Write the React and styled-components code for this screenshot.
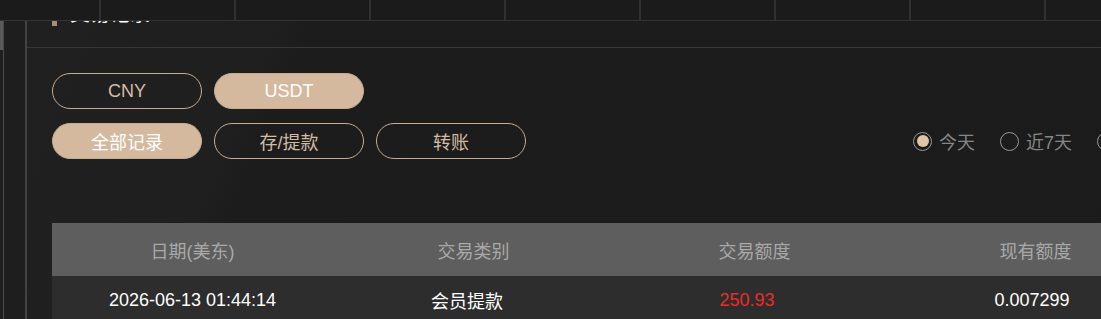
import styled, { createGlobalStyle } from 'styled-components';

const GlobalStyle = createGlobalStyle`
  html, body {
    margin: 0;
    padding: 0;
    background: #1b1b1b;
    overflow: hidden;
  }
  body {
    font-family: "Liberation Sans", "Noto Sans CJK SC", sans-serif;
    font-size: 18px;
  }
`;

const TopBar = styled.div`
  position: fixed;
  top: 0;
  left: 0;
  right: 0;
  z-index: 10;
  display: flex;
  height: 20px;
  background: #1b1b1b;
  border-bottom: 1px solid #343434;
`;

const TopLead = styled.div`
  width: 99px;
  flex-shrink: 0;
`;

const TopTab = styled.div`
  width: 133px;
  flex-shrink: 0;
  border-left: 2px solid #303030;
`;

const Layout = styled.div`
  display: flex;
  min-height: 100vh;
  width: 1400px;
`;

const Rail = styled.div`
  display: flex;
  width: 25px;
  flex-shrink: 0;
  background: #1e1e1e;
  border-right: 2px solid #434343;
`;

const ScrollTrack = styled.div`
  width: 3px;
  background: #1f1f1f;
  border-right: 1px solid #4c4c4c;
`;

const ScrollThumb = styled.div`
  height: 50px;
  background: #5a5a5a;
`;

const Panel = styled.div`
  flex: 1;
  background: linear-gradient(112deg, #202020 0%, #1f1f1f 16%, #1c1c1c 19%, #1b1b1b 100%);
`;

const TitleRow = styled.div`
  display: flex;
  align-items: flex-start;
  gap: 13px;
  height: 48px;
  padding: 8px 0 0 25px;
  box-sizing: border-box;
  border-bottom: 1px solid #383838;
`;

const Accent = styled.div`
  width: 5px;
  height: 18px;
  background: #a68e77;
`;

const Title = styled.div`
  margin-top: -4px;
  color: #fff;
  font-size: 20px;
  line-height: 20px;
`;

const Content = styled.div`
  padding: 25px 0 0 25px;
`;

const ButtonRow = styled.div`
  display: flex;
  align-items: center;
  gap: 12px;
  margin-bottom: 14px;
`;

const Pill = styled.button`
  width: 150px;
  height: 36px;
  border-radius: 18px;
  border: 1px solid #c8ad93;
  background: ${(p) => (p.$active ? '#d5b99f' : 'transparent')};
  color: ${(p) => (p.$active ? '#ffffff' : '#d3bca6')};
  font-family: inherit;
  font-size: 18px;
  padding: 0;
  cursor: pointer;
`;

const RadioGroup = styled.div`
  display: flex;
  align-items: center;
  gap: 25px;
  margin-left: 375px;
`;

const RadioItem = styled.label`
  display: flex;
  align-items: center;
  gap: 7px;
  color: #868686;
  font-size: 18px;
`;

const RadioCircle = styled.span`
  width: 19px;
  height: 19px;
  box-sizing: border-box;
  border-radius: 50%;
  border: 1.5px solid #999;
  display: flex;
  align-items: center;
  justify-content: center;

  &::after {
    content: '';
    width: 12px;
    height: 12px;
    border-radius: 50%;
    background: ${(p) => (p.$checked ? '#e2c5a6' : 'transparent')};
  }
`;

const Table = styled.div`
  margin-top: 64px;
  width: 1405px;
`;

const TableRow = styled.div`
  display: grid;
  grid-template-columns: repeat(5, 281px);
  align-items: center;
  height: ${(p) => (p.$head ? '53px' : '48px')};
  background: ${(p) => (p.$head ? '#5e5e5e' : '#2d2d2d')};
  color: ${(p) => (p.$head ? '#a9a9a9' : '#ffffff')};
`;

const Cell = styled.div`
  text-align: center;
  color: ${(p) => p.$color || 'inherit'};
  padding-right: ${(p) => p.$pr || 0}px;
`;

const radios = [
  { label: '今天', checked: true },
  { label: '近7天' },
  { label: '近30天' },
];

export default function App() {
  return (
    <>
      <GlobalStyle />
      <TopBar>
        <TopLead />
        {Array.from({ length: 8 }).map((_, i) => (
          <TopTab key={i} />
        ))}
      </TopBar>
      <Layout>
        <Rail>
          <ScrollTrack>
            <ScrollThumb />
          </ScrollTrack>
        </Rail>
        <Panel>
          <TitleRow>
            <Accent />
            <Title>交易记录</Title>
          </TitleRow>
          <Content>
            <ButtonRow>
              <Pill>CNY</Pill>
              <Pill $active>USDT</Pill>
            </ButtonRow>
            <ButtonRow>
              <Pill $active>全部记录</Pill>
              <Pill>存/提款</Pill>
              <Pill>转账</Pill>
              <RadioGroup>
                {radios.map((r) => (
                  <RadioItem key={r.label}>
                    <RadioCircle $checked={r.checked} />
                    {r.label}
                  </RadioItem>
                ))}
              </RadioGroup>
            </ButtonRow>
            <Table>
              <TableRow $head>
                <Cell>日期(美东)</Cell>
                <Cell>交易类别</Cell>
                <Cell>交易额度</Cell>
                <Cell>现有额度</Cell>
                <Cell>备注</Cell>
              </TableRow>
              <TableRow>
                <Cell>2026-06-13 01:44:14</Cell>
                <Cell $pr={13}>会员提款</Cell>
                <Cell $color="#ee2a2a" $pr={15}>250.93</Cell>
                <Cell $pr={7}>0.007299</Cell>
                <Cell />
              </TableRow>
            </Table>
          </Content>
        </Panel>
      </Layout>
    </>
  );
}
